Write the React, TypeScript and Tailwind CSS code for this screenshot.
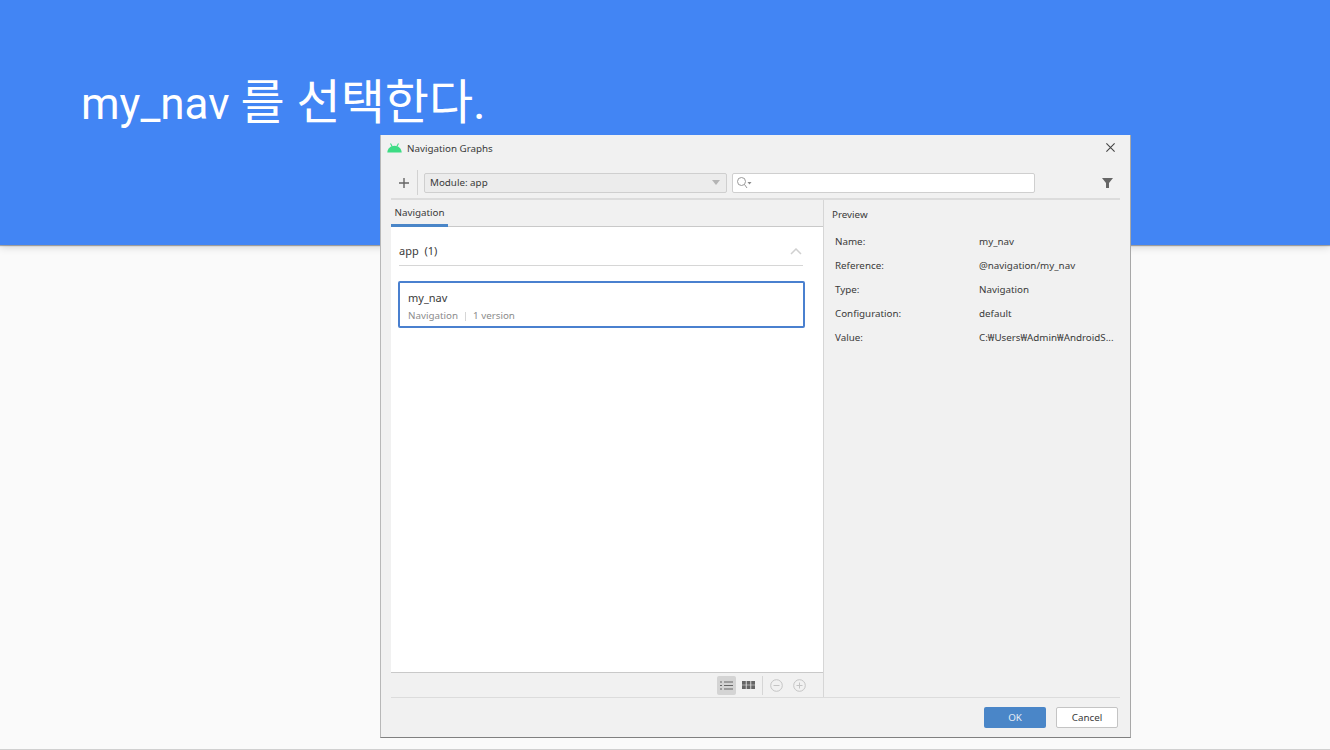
import React from "react";

const rows = [
  ["Name:", "my_nav"],
  ["Reference:", "@navigation/my_nav"],
  ["Type:", "Navigation"],
  ["Configuration:", "default"],
  ["Value:", "C:₩Users₩Admin₩AndroidS..."],
];

function AndroidIcon() {
  return (
    <svg width="15" height="10" viewBox="0 0 15 10" className="mb-[2px] shrink-0">
      <path d="M0.300 9.500C0.600 5.600 3.500 2.800 7.500 2.800s6.900 2.800 7.200 6.700z" fill="#3ddc84" />
      <path d="M3.500 0.500 5.200 3.500M11.500 0.500 9.800 3.500" stroke="#3ddc84" strokeWidth="1.100" />
    </svg>
  );
}

export default function App() {
  return (
    <div
      className="relative h-[750px] w-[1330px] overflow-hidden border-b border-[#d0d0d0] bg-[#fafafa]"
      style={{ fontFamily: '"Noto Sans", "Noto Sans CJK KR", sans-serif' }}
    >
      <header className="flex h-[245px] items-start bg-[#4285f4] pl-[81px] pt-[74px] shadow-[0_1px_1px_rgba(0,0,0,0.3),0_2px_8px_rgba(0,0,0,0.16)]">
        <h1
          className="text-[44px] leading-[58px] text-white"
          style={{ fontFamily: 'Roboto, "Noto Sans CJK KR", sans-serif' }}
        >
          my_nav <span className="text-[48px] leading-[58px]">를 선택한다.</span>
        </h1>
      </header>

      <div className="absolute left-[380px] top-[135px] flex h-[603px] w-[751px] flex-col border-r border-b border-l border-r-[#a8a8a8] border-b-[#808080] border-l-[#b8b8b8] bg-[#f1f1f1] text-[9.800px] text-[#3a3a3a]">
        {/* title bar */}
        <div className="flex h-[27px] shrink-0 items-center pl-[6px] pr-[15px]">
          <AndroidIcon />
          <span className="ml-[5px] pt-px">Navigation Graphs</span>
          <svg width="9" height="9" viewBox="0 0 9 9" className="mb-[2px] ml-auto">
            <path d="M0.400 0.400 8.600 8.600M8.600 0.400 0.400 8.600" stroke="#444" strokeWidth="1.100" />
          </svg>
        </div>

        {/* toolbar */}
        <div className="mx-[10px] flex h-[38px] shrink-0 items-center border-b-2 border-[#dcdcdc] pb-[3px] pt-[8px]">
          <svg width="10" height="10" viewBox="0 0 10 10" className="ml-[8px]">
            <path d="M5 0v10M0 5h10" stroke="#666" strokeWidth="1.400" />
          </svg>
          <div className="ml-[8px] h-[25px] w-px bg-[#d2d2d2]" />
          <div className="ml-[6px] flex h-[20px] w-[303px] items-center rounded-[2px] border border-[#cfcfcf] bg-[#ececec] pl-[5px] pr-[5px]">
            <span className="pt-px">Module: app</span>
            <svg width="10" height="6" viewBox="0 0 10 6" className="ml-auto">
              <path d="M1 0h8L5 5z" fill="#b4b4b4" />
            </svg>
          </div>
          <div className="ml-[5px] flex h-[20px] w-[303px] items-center rounded-[2px] border border-[#cfcfcf] bg-white pl-[4px]">
            <svg width="15" height="12" viewBox="0 0 15 12">
              <circle cx="4.500" cy="4.500" r="4" fill="none" stroke="#999" />
              <path d="M7.500 7.500 10 11" stroke="#999" />
              <path d="M10.500 5h4l-2 2.500z" fill="#888" />
            </svg>
          </div>
          <svg width="11" height="10" viewBox="0 0 11 10" className="ml-auto mr-[7px]">
            <path d="M0 0h11L7 5v5H4V5z" fill="#666" />
          </svg>
        </div>

        {/* body */}
        <div className="mx-[10px] flex min-h-0 flex-1 border-b border-[#dcdcdc]">
          <div className="flex w-[433px] shrink-0 flex-col border-r border-[#d6d6d6]">
            <div className="h-[27px] shrink-0 border-b border-[#c9c9c9]">
              <div className="flex h-[27px] w-[57px] items-center justify-center border-b-[3px] border-[#4a86c8] pt-[3px]">
                Navigation
              </div>
            </div>
            <div className="min-h-0 flex-1 border-b border-[#c9c9c9] bg-white pl-[7px] pr-[18px]">
              <div className="ml-px mr-[2px] flex h-[39px] items-center border-b border-[#d6d6d6] pr-px pt-[10px] text-[11px]">
                <span>app&nbsp;&nbsp;(1)</span>
                <svg width="12" height="7" viewBox="0 0 12 7" className="ml-auto">
                  <path d="M1 6 6 1l5 5" fill="none" stroke="#d0d0d0" strokeWidth="1.500" />
                </svg>
              </div>
              <div className="mt-[15px] flex h-[47px] flex-col rounded-[2px] border-2 border-[#4a80cf] pl-[8px] pt-[7px]">
                <div className="text-[11px] leading-[16px]">my_nav</div>
                <div className="mt-[2px] flex items-center leading-[16px] text-[#8c8c8c]">
                  <span>Navigation</span>
                  <span className="mx-[7px] h-[9px] w-px bg-[#d6d6d6]" />
                  <span>1 version</span>
                </div>
              </div>
            </div>
            <div className="flex h-[24px] shrink-0 items-center justify-end pr-[17px]">
              <div className="flex h-[19px] w-[19px] items-center justify-center rounded-[2px] bg-[#d4d4d4]">
                <svg width="13" height="9" viewBox="0 0 13 9">
                  <path d="M0 1h2M4 1h9M0 4.500h2M4 4.500h9M0 8h2M4 8h9" stroke="#666" strokeWidth="1.200" />
                </svg>
              </div>
              <svg width="13" height="8" viewBox="0 0 13 8" className="ml-[6px]">
                <path d="M0 0h3.800v3.700H0zM4.600 0h3.800v3.700H4.600zM9.200 0H13v3.700H9.200zM0 4.300h3.800V8H0zM4.600 4.300h3.800V8H4.600zM9.200 4.300H13V8H9.200z" fill="#666" />
              </svg>
              <div className="ml-[7px] h-[19px] w-px bg-[#d6d6d6]" />
              <svg width="13" height="13" viewBox="0 0 13 13" className="ml-[7px]">
                <circle cx="6.500" cy="6.500" r="5.800" fill="none" stroke="#c4c4c4" />
                <path d="M3.500 6.500h6" stroke="#c4c4c4" />
              </svg>
              <svg width="13" height="13" viewBox="0 0 13 13" className="ml-[10px]">
                <circle cx="6.500" cy="6.500" r="5.800" fill="none" stroke="#c4c4c4" />
                <path d="M3.500 6.500h6M6.500 3.500v6" stroke="#c4c4c4" />
              </svg>
            </div>
          </div>

          <div className="min-w-0 flex-1 pl-[8px] pt-[8px]">
            <div className="leading-[14px]">Preview</div>
            <div className="mt-[8px] pl-[3px]">
              {rows.map(([k, v]) => (
                <div key={k} className="flex h-[24px] items-center">
                  <span className="w-[144px] shrink-0">{k}</span>
                  <span className="whitespace-nowrap">{v}</span>
                </div>
              ))}
            </div>
          </div>
        </div>

        {/* footer */}
        <div className="flex h-[39px] shrink-0 items-center justify-end gap-[10px] pr-[12px]">
          <button className="h-[21px] w-[62px] rounded-[2px] bg-[#4a86c8] pt-[2px] text-[#e8eef6]">OK</button>
          <button className="h-[21px] w-[62px] rounded-[2px] border border-[#c4c4c4] bg-white pt-[2px]">Cancel</button>
        </div>
      </div>
    </div>
  );
}
